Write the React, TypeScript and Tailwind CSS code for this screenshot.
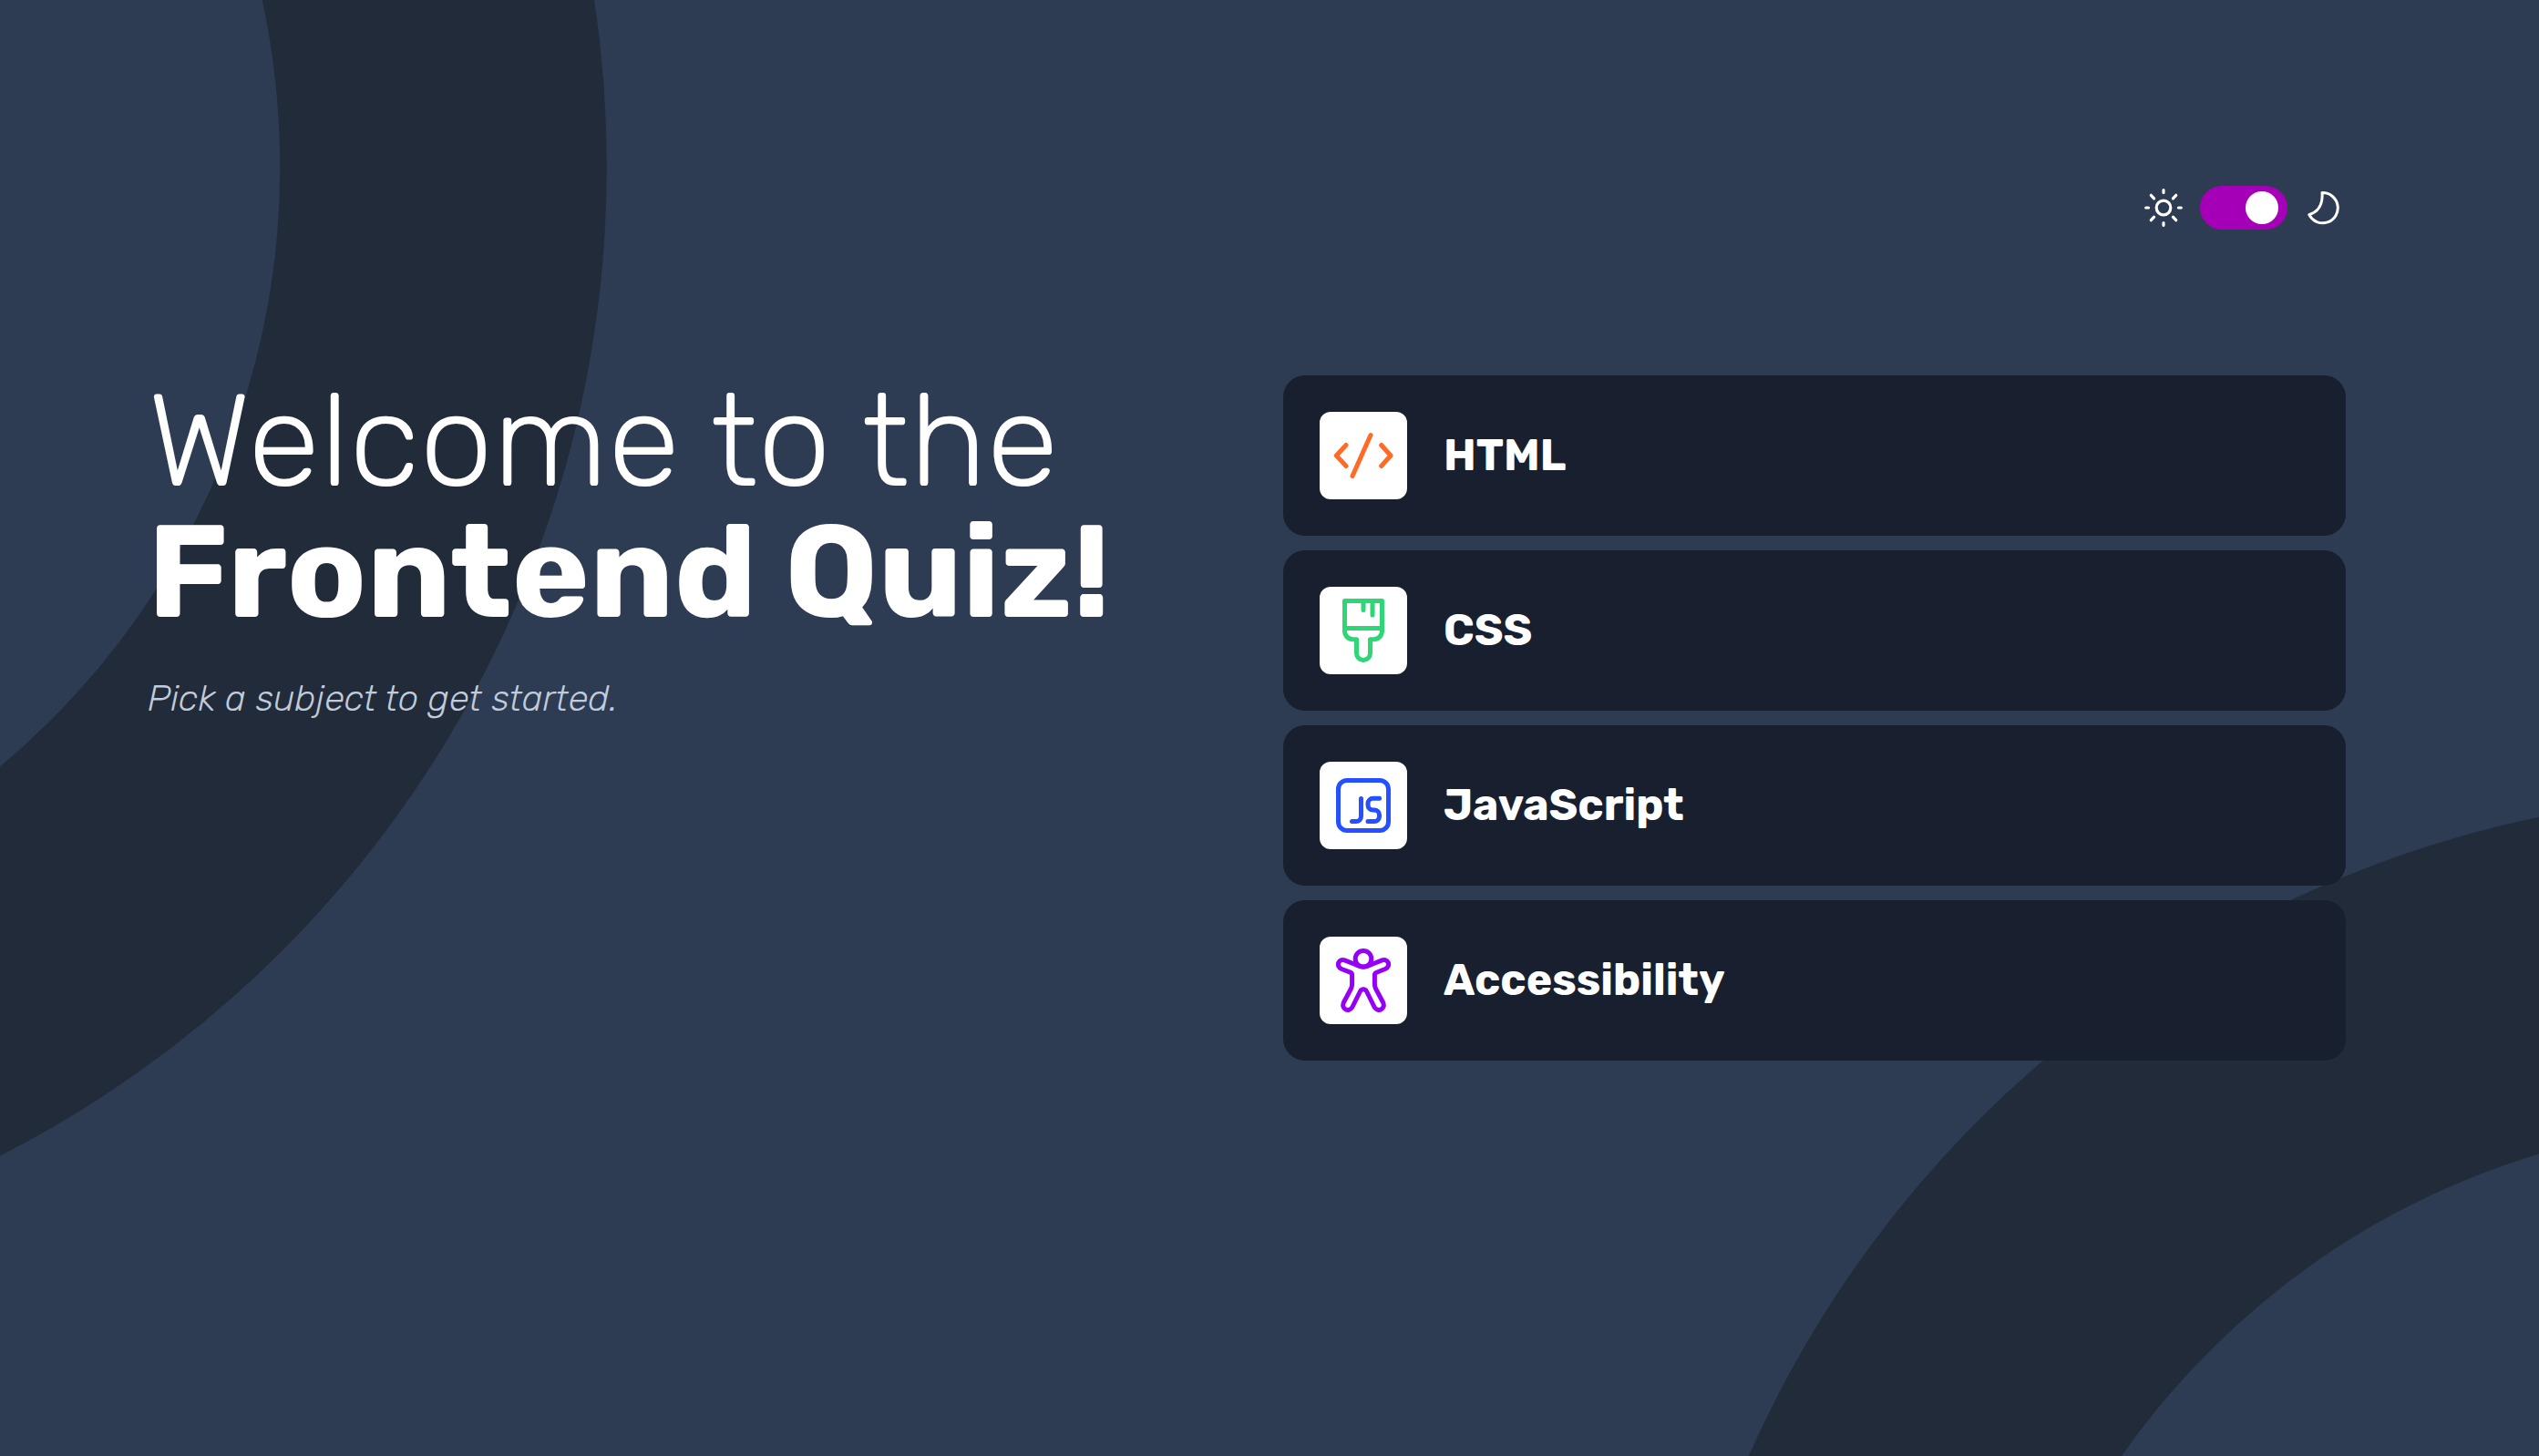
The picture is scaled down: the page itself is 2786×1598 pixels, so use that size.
import { useState, type ReactNode } from "react";

function BackgroundRings() {
  return (
    <svg
      className="pointer-events-none absolute inset-0 h-full w-full"
      viewBox="0 0 2786 1598"
      preserveAspectRatio="xMidYMid slice"
      fill="none"
      stroke="#222b39"
      strokeWidth="358.5"
      aria-hidden="true"
    >
      <circle cx="-552" cy="183" r="1038.5" />
      <circle cx="3033" cy="2089.5" r="1038.5" />
    </svg>
  );
}

function SunIcon() {
  return (
    <svg className="size-12" viewBox="0 0 48 48" fill="none" stroke="#fff" strokeWidth="3.2" strokeLinecap="round" aria-hidden="true">
      <circle cx="24" cy="24" r="7.8" />
      <path d="M24 4.7v2.8M24 40.5v2.8M4.7 24h2.8M40.5 24h2.8M10.3 10.3l3.3 3.5M37.7 10.3l-3.3 3.5M10.3 37.7l3.3-3.5M37.7 37.7l-3.3-3.5" />
    </svg>
  );
}

function MoonIcon() {
  return (
    <svg className="size-12" viewBox="0 0 48 48" fill="none" stroke="#fff" strokeWidth="3" strokeLinejoin="round" aria-hidden="true">
      <path d="M22 7.6A16.6 16.6 0 1 1 7.8 31.6C17.5 28.8 23 20.5 22 7.6Z" />
    </svg>
  );
}

const iconProps = {
  className: "size-24",
  viewBox: "0 0 96 96",
  fill: "none",
  strokeWidth: 5,
  strokeLinecap: "round",
  strokeLinejoin: "round",
  "aria-hidden": true,
} as const;

const subjects: { name: string; icon: ReactNode }[] = [
  {
    name: "HTML",
    icon: (
      <svg {...iconProps} stroke="#ff6a27">
        <path d="M29 36.5 18.3 48 29 59.5M67.7 36.5 78 48 67.7 59.5M56 25.5 36 70.5" />
      </svg>
    ),
  },
  {
    name: "CSS",
    icon: (
      <svg {...iconProps} stroke="#2fd676">
        <path d="M27.5 15.5H68.5V49a9 9 0 0 1-9 8.7H55.5V73a7.5 7.5 0 0 1-15 0V57.7H36.5a9 9 0 0 1-9-8.7ZM27.5 45.5H68.5M48 15.5V25.5M58 15.5V31" />
      </svg>
    ),
  },
  {
    name: "JavaScript",
    icon: (
      <svg {...iconProps} stroke="#2450ff">
        <rect x="20.5" y="20.5" width="55" height="55" rx="9.5" />
        <path d="M45.5 40.5V60a5.5 5.5 0 0 1-5.5 5.6H35.5M65.6 40.3H58.5a5.5 5.5 0 0 0-5.5 5.5V47.5a5.5 5.5 0 0 0 5.5 5.5H60a5.5 5.5 0 0 1 5.5 5.5V60a5.5 5.5 0 0 1-5.5 5.6H53" />
      </svg>
    ),
  },
  {
    name: "Accessibility",
    icon: (
      <svg {...iconProps} stroke="#9600f5">
        <circle cx="48" cy="24.3" r="8.8" />
        <path d="M48 33.3C45 33.3 42 32 39 30.5L27.5 25.9C20.5 23.5 17.5 32.5 24 35.5L33.5 39.2C35 39.8 35.6 40.7 35.6 42V52C35.6 54 35.4 55.3 34.5 57L26.5 72C23 79.5 32 83.5 35.8 77.5L44.5 60C46 57 50 57 51.5 60L60.2 77.5C64 83.5 73 79.5 69.5 72L61.5 57C60.6 55.3 60.4 54 60.4 52V42C60.4 40.7 61 39.8 62.5 39.2L72 35.5C78.5 32.5 75.5 23.5 68.5 25.9L57 30.5C54 32 51 33.3 48 33.3Z" />
      </svg>
    ),
  },
];

export default function App() {
  const [dark, setDark] = useState(true);

  return (
    <div className="relative min-h-screen overflow-hidden bg-[#2d3b53] font-['Rubik','Inter',sans-serif] text-white">
      <BackgroundRings />
      <div className="relative pt-[204px] pr-[212px] pb-20 pl-[162px]">
        <header className="flex justify-end">
          <label className="flex cursor-pointer items-center gap-4">
            <SunIcon />
            <input
              type="checkbox"
              role="switch"
              aria-label="Dark mode"
              checked={dark}
              onChange={(e) => setDark(e.target.checked)}
              className="flex h-12 w-24 cursor-pointer appearance-none items-center rounded-full bg-[#a500b8] px-2.5 before:size-9 before:rounded-full before:bg-white checked:justify-end"
            />
            <MoonIcon />
          </label>
        </header>
        <main className="mt-40 grid grid-cols-2 items-start gap-20">
          <section>
            <h1 className="text-[144px] leading-none whitespace-nowrap">
              <span className="block font-light">Welcome to the</span>
              <strong className="block font-bold">Frontend Quiz!</strong>
            </h1>
            <p className="mt-10 text-[40px] leading-[54px] font-light text-[#c0cbdc] italic">
              Pick a subject to get started.
            </p>
          </section>
          <ul className="flex flex-col gap-4">
            {subjects.map(({ name, icon }) => (
              <li key={name}>
                <button
                  type="button"
                  className="flex w-full cursor-pointer items-center gap-10 rounded-3xl bg-[#181f2e] p-10 text-left text-5xl font-bold"
                >
                  <span className="rounded-xl bg-white">{icon}</span>
                  {name}
                </button>
              </li>
            ))}
          </ul>
        </main>
      </div>
    </div>
  );
}
